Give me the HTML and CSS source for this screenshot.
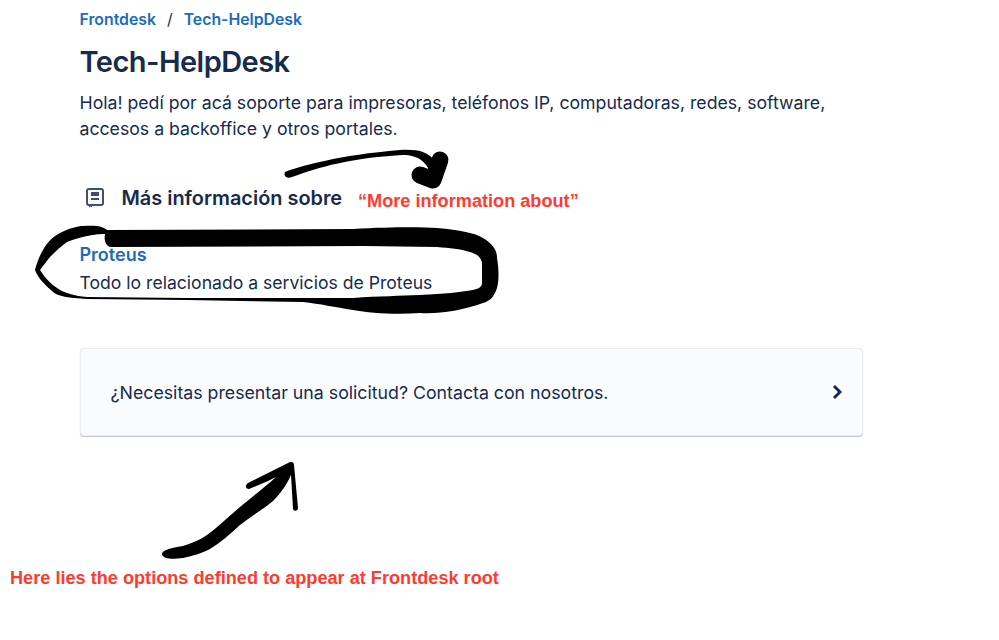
FILE: index.html
```html
<!DOCTYPE html>
<html lang="es">
<head>
  <meta charset="UTF-8" />
  <title>Tech-HelpDesk</title>
  <link rel="stylesheet" href="styles.css">
</head>
<body>

  <main class="page">
    <!-- Breadcrumbs -->
    <nav class="crumbs">
      <a href="#frontdesk">Frontdesk</a>
      <span class="crumb-sep">/</span>
      <a href="#helpdesk">Tech-HelpDesk</a>
    </nav>

    <h1 class="title">Tech-HelpDesk</h1>
    <p class="intro">Hola! pedí por acá soporte para impresoras, teléfonos IP, computadoras, redes, software, accesos a backoffice y otros portales.</p>

    <!-- Knowledge base -->
    <section class="kb">
      <h2 class="kb-head">
        <svg class="kb-icon" viewBox="0 0 18 20" width="18" height="20">
          <path d="M3 1h12a2 2 0 0 1 2 2v12a2 2 0 0 1-2 2H3a2 2 0 0 1-2-2V3a2 2 0 0 1 2-2z" fill="none" stroke="#3d5078" stroke-width="2"/>
          <path d="M5 4h8v4H5zM5 10h8v2H5z" fill="#3d5078"/>
          <path d="M3 17h3v2.500l-1.500-1-1.500 1z" fill="#3d5078"/>
        </svg>
        Más información sobre
      </h2>
      <a class="kb-link" href="#proteus">Proteus</a>
      <p class="kb-desc">Todo lo relacionado a servicios de Proteus</p>
    </section>

    <!-- Request card -->
    <a class="card" href="#solicitud">
      <span>¿Necesitas presentar una solicitud? Contacta con nosotros.</span>
      <svg viewBox="0 0 10 16" width="10" height="16">
        <path d="M2 2l6 6-6 6" fill="none" stroke="#172b4d" stroke-width="3"/>
      </svg>
    </a>
  </main>

  <!-- Annotations drawn over the page -->
  <svg class="marks" viewBox="0 0 999 640" width="999" height="640">
    <path d="M285 172C300 166 340 155 400 150C418 149 428 152 434 160L438 170L431 173C426 163 420 155 402 155C350 158 320 167 292 177C287 179 283 176 285 172Z" fill="#000"/>
    <path d="M420 175L433 180L440 160" fill="none" stroke="#000" stroke-width="17" stroke-linecap="round" stroke-linejoin="round"/>
    <path fill-rule="evenodd" fill="#000" d="M107 230L353 229C390 227 420 227 437 228C460 230 475 233 483 238C493 244 497 250 497 258C499 270 499 280 497 288C494 297 490 301 483 303C460 311 440 314 420 313C395 315 370 313 353 310C335 307 320 304 303 302L187 300L87 299C68 298 58 296 53 292C45 285 38 278 35 270C37 262 40 255 43 250C48 241 54 236 60 233C70 228 78 226 83 226C95 225 103 226 107 230ZM105 234C97 234 92 235 87 236C78 238 72 240 67 242C60 247 55 252 50 257C46 262 43 266 40 270C45 278 51 284 57 288C64 293 75 296 87 297L187 298L300 298L353 298C380 296 400 296 420 295C445 294 460 292 473 290C478 289 482 287 482 283V262C480 256 476 254 470 252C460 249 450 248 437 247L363 246L110 247C105 245 104 240 105 234Z"/>
    <path d="M164 551C170 548 177 547 183 546C192 543 200 540 207 535C218 527 228 517 240 507C252 497 265 487 276 477L268 481L249 489C245 489 245 485 248 483L288 463C291 461 294 462 294 465L298 508C298 511 294 512 293 509L291 475C286 486 280 494 273 501C262 510 250 517 240 525C230 534 220 543 210 549C200 554 192 556 183 558C175 559 170 559 166 558C161 556 161 553 164 551Z" fill="#000"/>
  </svg>
  <span class="note note-more">“More information about”</span>
  <span class="note note-root">Here lies the options defined to appear at Frontdesk root</span>

</body>
</html>
```

FILE: styles.css
```css
body {
  margin: 0;
  background: #fff;
  color: #172b4d;
  font-family: Inter, sans-serif;
  height: 640px;
  overflow: hidden;
  position: relative;
}
a {
  color: #1c6cba;
  text-decoration: none;
}
.page {
  width: 783.500px;
  padding: 10px 0 0 79.500px;
}
.crumbs {
  display: flex;
  gap: 11px;
  font-size: 15.800px;
  font-weight: 600;
  line-height: 20px;
}
.crumb-sep {
  font-weight: 400;
}
.title {
  margin: 14px 0 0;
  font-size: 29px;
  font-weight: 600;
  line-height: 36px;
  letter-spacing: -0.55px;
}
.intro {
  margin: 10px 0 0;
  font-size: 17.680px;
  line-height: 26px;
}
.kb {
  margin-top: 42px;
}
.kb-head {
  display: flex;
  align-items: center;
  gap: 18px;
  margin: 0 0 0 6px;
  font-size: 19.900px;
  font-weight: 600;
  line-height: 28px;
}
.kb-link {
  display: block;
  margin-top: 30px;
  font-size: 18px;
  font-weight: 600;
  line-height: 26px;
}
.kb-desc {
  margin: 2px 0 0;
  font-size: 17.600px;
  line-height: 26px;
}
.card {
  display: flex;
  align-items: center;
  justify-content: space-between;
  height: 88px;
  margin-top: 52px;
  padding: 0 20px 0 30px;
  box-sizing: border-box;
  background: #fafbfc;
  border: 1px solid #ebecf0;
  border-radius: 4px;
  box-shadow: 0 1px 1px #c1c7d0;
  color: #172b4d;
  font-size: 17.740px;
}
.marks {
  position: absolute;
  top: 0;
  left: 0;
  pointer-events: none;
}
.note {
  position: absolute;
  color: #ff3b30;
  font-family: "Liberation Sans", Arial, sans-serif;
  font-weight: 700;
  font-size: 18.150px;
  line-height: 22px;
  white-space: nowrap;
}
.note-more {
  left: 358px;
  top: 190px;
}
.note-root {
  left: 10px;
  top: 567px;
}
```
